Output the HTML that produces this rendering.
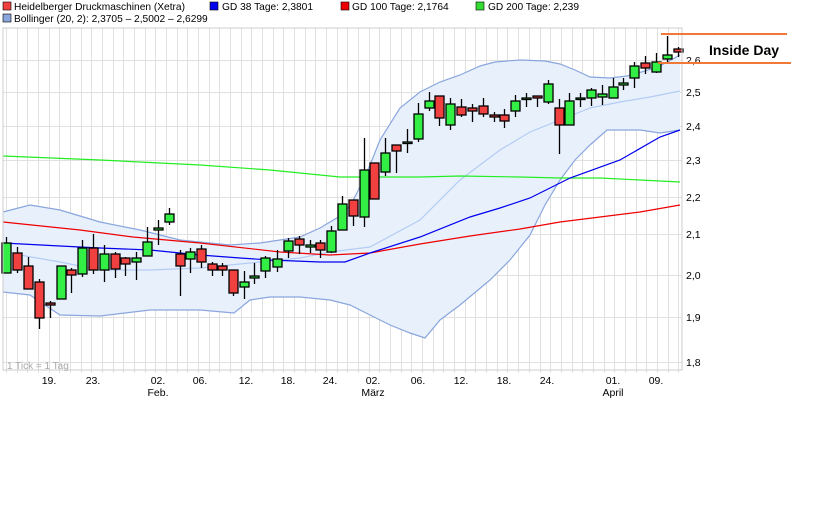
<!DOCTYPE html>
<html><head><meta charset="utf-8"><style>
body{margin:0;background:#fff;width:840px;height:525px;overflow:hidden;font-family:"Liberation Sans",sans-serif}
svg{position:absolute;left:0;top:0}
</style></head><body>
<svg width="840" height="525" viewBox="0 0 840 525" font-family="Liberation Sans, sans-serif">
<g font-size="10.2" fill="#000">
<rect x="3" y="2" width="8" height="8" fill="#f04040" stroke="#000" stroke-width="0.6"/>
<text x="14" y="10">Heidelberger Druckmaschinen (Xetra)</text>
<rect x="210" y="2" width="8" height="8" fill="#0000ee" stroke="#000" stroke-width="0.6"/>
<text x="222" y="10">GD 38 Tage: 2,3801</text>
<rect x="341" y="2" width="8" height="8" fill="#ee0000" stroke="#000" stroke-width="0.6"/>
<text x="352" y="10">GD 100 Tage: 2,1764</text>
<rect x="476" y="2" width="8" height="8" fill="#33dd33" stroke="#000" stroke-width="0.6"/>
<text x="488" y="10">GD 200 Tage: 2,239</text>
<rect x="3" y="14" width="8" height="8" fill="#8aa6dd" stroke="#000" stroke-width="0.6"/>
<text x="14" y="22">Bollinger (20, 2): 2,3705 – 2,5002 – 2,6299</text>
</g>
<g id="grid" stroke="#e0e0e0" stroke-width="1"></g>
<polygon id="band" fill="#e8f0fc" stroke="none"/>
<g fill="none" stroke-width="1.2">
<polyline id="up" stroke="#8aa6dd"/>
<polyline id="lo" stroke="#8aa6dd"/>
<polyline id="mid" stroke="#b4ccf4"/>
<polyline id="g200" stroke="#22ee22" points="3,156 100,160 200,165 270,170 320,175 340,177 420,177 460,176 520,177 560,178 600,178 640,180 680,182"/>
<polyline id="g100" stroke="#ee0000" points="3,222 80,230 133,237 200,243 280,252 330,255 370,253 420,244 470,236 520,229 560,222 600,217 640,212 680,205"/>
<polyline id="g38" stroke="#0000ee" points="3,243 60,246 100,248 150,250 200,255 240,258 270,260 320,262 345,262 370,253 420,237 470,217 500,208 530,198 570,178 620,160 660,137 680,130"/>
</g>
<g id="candles" stroke="#000" stroke-width="1.3"></g>
<rect x="3" y="28" width="679" height="342" fill="none" stroke="#cccccc"/>
<g font-size="10.5" fill="#000">
<text x="686" y="64">2,6</text><text x="686" y="96">2,5</text><text x="686" y="130">2,4</text>
<text x="686" y="164">2,3</text><text x="686" y="201">2,2</text><text x="686" y="238">2,1</text>
<text x="686" y="279">2,0</text><text x="686" y="321">1,9</text><text x="686" y="366">1,8</text>
<g text-anchor="middle">
<text x="49" y="384">19.</text><text x="93" y="384">23.</text><text x="158" y="384">02.</text>
<text x="200" y="384">06.</text><text x="246" y="384">12.</text><text x="288" y="384">18.</text>
<text x="330" y="384">24.</text><text x="373" y="384">02.</text><text x="418" y="384">06.</text>
<text x="461" y="384">12.</text><text x="504" y="384">18.</text><text x="547" y="384">24.</text>
<text x="613" y="384">01.</text><text x="656" y="384">09.</text>
<text x="158" y="396">Feb.</text><text x="373" y="396">März</text><text x="613" y="396">April</text>
</g>
</g>
<text x="7" y="369" font-size="10" fill="#aaa">1 Tick = 1 Tag</text>
<line x1="661" y1="34" x2="787" y2="34" stroke="#f07838" stroke-width="2"/>
<line x1="658" y1="63" x2="791" y2="63" stroke="#f07838" stroke-width="2"/>
<text x="709" y="55" font-size="14" font-weight="bold" fill="#000">Inside Day</text>
</svg>
<script>
var ns="http://www.w3.org/2000/svg";
function el(p,t,a){var e=document.createElementNS(ns,t);for(var k in a)e.setAttribute(k,a[k]);p.appendChild(e);return e;}
var g=document.getElementById('grid');
[60,92,126,160,197,234,275,317,362].forEach(function(y){el(g,'line',{x1:3,x2:682,y1:y+.5,y2:y+.5});});
for(var i=0;i<64;i++){var x=Math.round(6+i*10.67)+.5;el(g,'line',{x1:x,x2:x,y1:28,y2:373});}
var up=[[3,212],[30,205],[60,210],[100,222],[140,230],[180,240],[230,245],[260,243],[300,237],[320,228],[330,222],[340,216],[350,206],[360,187],[370,165],[380,140],[400,108],[420,92],[440,82],[460,75],[480,66],[495,62],[520,60],[545,61],[560,64],[575,70],[590,77],[610,78],[627,76],[645,71],[660,66],[680,55]];
var lo=[[3,292],[30,295],[60,315],[100,316],[150,310],[200,310],[234,313],[250,300],[270,297],[300,297],[330,300],[350,305],[370,315],[390,325],[410,333],[425,338],[440,320],[460,305],[490,280],[510,260],[530,235],[545,205],[560,180],[575,160],[590,145],[607,130],[640,130],[660,133],[680,130]];
var mid=[[3,250],[20,255],[60,262],[100,270],[150,270],[200,268],[260,262],[300,258],[330,252],[370,247],[420,220],[460,180],[500,150],[530,132],[560,120],[590,108],[620,102],[650,97],[680,91]];
function pts(a){return a.map(function(p){return p.join(',')}).join(' ');}
document.getElementById('up').setAttribute('points',pts(up));
document.getElementById('lo').setAttribute('points',pts(lo));
document.getElementById('mid').setAttribute('points',pts(mid));
document.getElementById('band').setAttribute('points',pts(up)+' '+pts(lo.slice().reverse()));
var C=[[6,'g',243,273,237,273],[17,'r',253,270,247,273],[28,'r',266,289,257,289],[39,'r',282,318,279,329],[50,'r',303,305,301,318],[61,'g',266,299,266,299],[71,'r',270,275,268,293],[82,'g',248,274,240,277],[93,'r',248,270,234,274],[104,'g',254,270,245,282],[115,'r',254,269,252,278],[125,'r',258,264,257,276],[136,'g',258,262,252,280],[147,'g',242,256,227,256],[158,'g',228,230,220,245],[169,'g',214,222,208,225],[180,'r',254,266,250,296],[190,'g',252,259,248,273],[201,'r',249,262,245,268],[212,'r',264,270,262,276],[222,'r',266,270,263,276],[233,'r',270,293,270,296],[244,'g',282,287,271,299],[254,'g',276,278,263,284],[265,'g',258,271,256,278],[277,'g',259,267,250,272],[288,'g',241,251,238,258],[299,'r',239,245,236,254],[310,'g',245,247,240,253],[320,'r',243,250,240,258],[331,'g',231,252,226,253],[342,'g',204,230,196,230],[353,'r',200,216,200,226],[364,'g',170,217,138,227],[374,'r',163,199,163,199],[385,'g',153,172,138,176],[396,'r',145,151,145,173],[407,'g',142,143,129,153],[418,'g',114,139,103,142],[429,'g',101,108,92,111],[439,'r',96,118,96,126],[450,'g',104,125,98,130],[461,'r',107,115,99,117],[472,'r',108,111,104,122],[483,'r',106,114,98,117],[494,'r',115,117,112,122],[504,'r',115,121,109,128],[515,'g',101,111,95,117],[526,'g',98,99,93,107],[537,'r',96,98,96,107],[548,'g',84,102,80,104],[559,'r',108,125,99,154],[569,'g',101,125,93,125],[580,'g',98,99,93,107],[591,'g',90,98,88,106],[602,'g',94,97,85,105],[613,'g',87,98,78,98],[623,'g',83,85,78,90],[634,'g',66,78,62,88],[645,'r',63,68,56,74],[656,'g',62,72,53,73],[667,'g',55,59,36,62],[678,'r',49,52,47,57]];
var cg=document.getElementById('candles');
C.forEach(function(c){var x=c[0]+.5;
el(cg,'line',{x1:x,x2:x,y1:c[4],y2:c[5]});
var h=Math.max(c[3]-c[2],1.5);
el(cg,'rect',{x:x-4.5,y:c[2],width:9,height:h,fill:c[1]=='g'?'#33ee44':'#f04040'});});
</script>
</body></html>
